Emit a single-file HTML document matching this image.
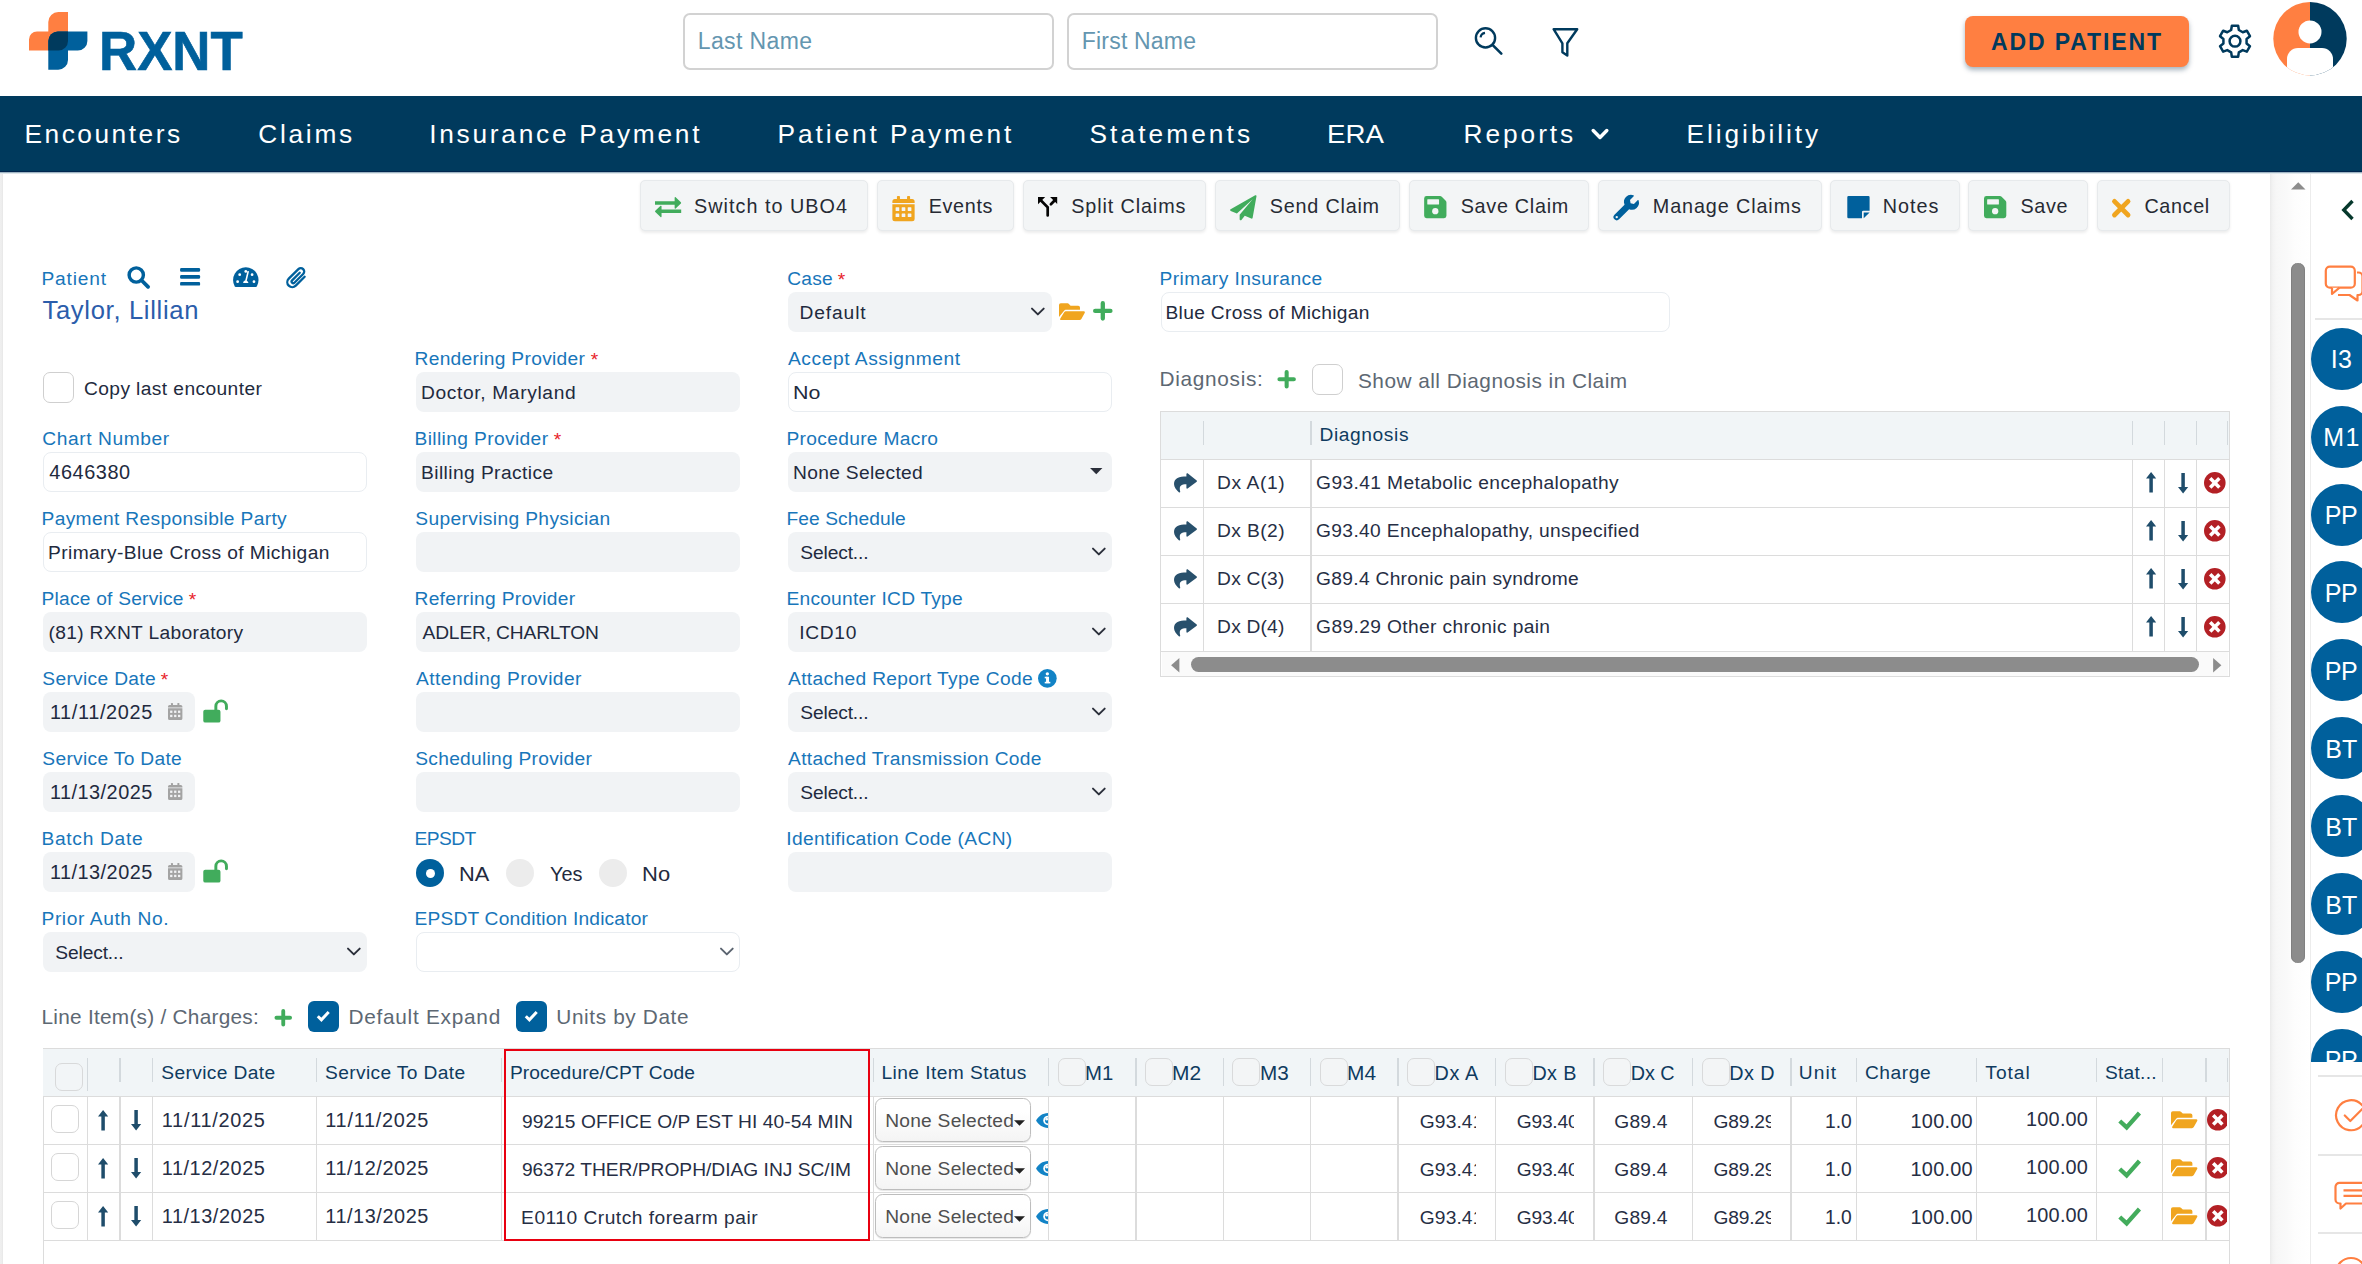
<!DOCTYPE html>
<html lang="en"><head><meta charset="utf-8"><title>RXNT Billing - Encounter</title>
<style>
html,body{margin:0;padding:0;background:#fff;}
body{width:2362px;height:1264px;position:relative;overflow:hidden;font-family:"Liberation Sans",sans-serif;}
.t{position:absolute;white-space:nowrap;}
svg{display:block;overflow:visible}
</style></head><body>
<svg style="position:absolute;left:29.0px;top:12.3px;" width="58.4" height="57.7" viewBox="0 0 58.400 57.700"><path d="M29.300 0H39V29a9.600 9.600 0 0 1-9.600 9.600H0V27.500a8 8 0 0 1 8-8H19.300V10A10 10 0 0 1 29.300 0z" fill="#ff7f41"/><path d="M28.900 19.500H58.400V29a9.600 9.600 0 0 1-9.600 9.600H39V48a9.700 9.700 0 0 1-9.700 9.700H19.300V29.100a9.600 9.600 0 0 1 9.600-9.600z" fill="#00609c"/><path d="M28.900 19.500H39V29a9.600 9.600 0 0 1-9.600 9.600H19.300V29.100a9.600 9.600 0 0 1 9.600-9.600z" fill="#003a5d"/></svg>
<span class="t " style="top:15.5px;font-size:54.6px;line-height:71px;color:#00609c;left:98.5px;font-weight:700;-webkit-text-stroke:0.6px #00609c;transform:scaleX(0.9674);transform-origin:0 0;">RXNT</span>
<div style="position:absolute;left:683.0px;top:12.5px;width:371.0px;height:57.0px;box-sizing:border-box;border:2px solid #d2d2d2;border-radius:7px;background:#fff;"></div>
<span class="t " style="top:25.5px;font-size:23.0px;line-height:30px;color:#6496b0;left:697.8px;letter-spacing:0.37px;">Last Name</span>
<div style="position:absolute;left:1067.0px;top:12.5px;width:371.0px;height:57.0px;box-sizing:border-box;border:2px solid #d2d2d2;border-radius:7px;background:#fff;"></div>
<span class="t " style="top:25.5px;font-size:23.0px;line-height:30px;color:#6496b0;left:1081.8px;letter-spacing:0.19px;">First Name</span>
<svg style="position:absolute;left:1470.0px;top:24.0px;" width="36.0" height="34.0" viewBox="1470 24 36 34"><circle cx="1485.500" cy="37.900" r="9.600" fill="none" stroke="#003a5d" stroke-width="2.400"/><path d="M1492.500 44.800L1501.300 53.700" stroke="#003a5d" stroke-width="2.600" stroke-linecap="round"/><path d="M1480.600 37.300A5.200 5.200 0 0 1 1485 32.900" fill="none" stroke="#003a5d" stroke-width="2.200"/></svg>
<svg style="position:absolute;left:1550.0px;top:24.0px;" width="32.0" height="36.0" viewBox="1550 24 32 36"><path d="M1553.600 29.200H1577.200L1567.300 43.300V55.600L1562.400 52.300V43.300Z" fill="none" stroke="#003a5d" stroke-width="2.400" stroke-linejoin="round"/></svg>
<div style="position:absolute;left:1965.3px;top:15.8px;width:223.5px;height:51.0px;box-sizing:border-box;background:#ff7f41;border-radius:8px;box-shadow:0 3px 5px rgba(0,40,70,.35);"></div>
<span class="t " style="top:26.5px;font-size:23.0px;line-height:30px;color:#003a5d;left:1991.0px;letter-spacing:1.89px;font-weight:700;">ADD PATIENT</span>
<svg style="position:absolute;left:2215.0px;top:20.0px;" width="40.0" height="42.0" viewBox="2215 20 40 42"><path d="M2231.16 30.04L2231.85 25.72L2238.15 25.72L2238.84 30.04L2242.74 32.29L2246.83 30.73L2249.98 36.19L2246.58 38.95L2246.58 43.45L2249.98 46.21L2246.83 51.67L2242.74 50.11L2238.84 52.36L2238.15 56.68L2231.85 56.68L2231.16 52.36L2227.26 50.11L2223.17 51.67L2220.02 46.21L2223.42 43.45L2223.42 38.95L2220.02 36.19L2223.17 30.73L2227.26 32.29Z" fill="none" stroke="#003a5d" stroke-width="2.500" stroke-linejoin="round"/><circle cx="2235.0" cy="41.2" r="5.400" fill="none" stroke="#003a5d" stroke-width="2.500"/></svg>
<svg style="position:absolute;left:2273.0px;top:2.0px;" width="74.0" height="74.0" viewBox="0 0 74 74"><defs><clipPath id="avc"><circle cx="37" cy="36.700" r="36.700"/></clipPath></defs><g clip-path="url(#avc)"><rect x="0" y="0" width="37" height="74" fill="#ff7f41"/><rect x="37" y="0" width="37" height="74" fill="#003a5d"/><circle cx="37" cy="29.900" r="11.500" fill="#fff"/><rect x="14" y="46" width="46" height="40" rx="11" fill="#fff"/></g></svg>
<div style="position:absolute;left:0.0px;top:96.0px;width:2362.0px;height:76.0px;box-sizing:border-box;background:#003a5d;"></div>
<span class="t " style="top:117.2px;font-size:26.3px;line-height:34px;color:#fff;left:24.5px;letter-spacing:2.51px;">Encounters</span>
<span class="t " style="top:117.2px;font-size:26.3px;line-height:34px;color:#fff;left:258.2px;letter-spacing:2.73px;">Claims</span>
<span class="t " style="top:117.2px;font-size:26.3px;line-height:34px;color:#fff;left:429.2px;letter-spacing:2.73px;">Insurance Payment</span>
<span class="t " style="top:117.2px;font-size:26.3px;line-height:34px;color:#fff;left:777.5px;letter-spacing:2.92px;">Patient Payment</span>
<span class="t " style="top:117.2px;font-size:26.3px;line-height:34px;color:#fff;left:1089.5px;letter-spacing:3.06px;">Statements</span>
<span class="t " style="top:117.2px;font-size:26.3px;line-height:34px;color:#fff;left:1327.4px;transform:scaleX(1.0518);transform-origin:0 0;">ERA</span>
<span class="t " style="top:117.2px;font-size:26.3px;line-height:34px;color:#fff;left:1463.5px;letter-spacing:2.94px;">Reports</span>
<span class="t " style="top:117.2px;font-size:26.3px;line-height:34px;color:#fff;left:1686.5px;letter-spacing:2.94px;">Eligibility</span>
<svg style="position:absolute;left:1591.3px;top:127.6px;" width="18.0" height="12.0" viewBox="0 0 18 12"><path d="M2.200 2.600L9 9.400L15.800 2.600" fill="none" stroke="#fff" stroke-width="3.500" stroke-linecap="round" stroke-linejoin="round"/></svg>
<div style="position:absolute;left:0.0px;top:170.5px;width:2362.0px;height:1.5px;box-sizing:border-box;background:#01264f;"></div>
<div style="position:absolute;left:0.0px;top:172.0px;width:2362.0px;height:1.5px;box-sizing:border-box;background:linear-gradient(180deg,#7f9db0,#fff);"></div>
<div style="position:absolute;left:0.0px;top:174.0px;width:3.2px;height:1090.0px;box-sizing:border-box;background:linear-gradient(90deg,#efefef 0,#ededed 70%,#e4e4e4 100%);"></div>
<div style="position:absolute;left:2270.0px;top:174.0px;width:41.0px;height:1090.0px;box-sizing:border-box;background:linear-gradient(90deg,#eaeaea 0,#f3f3f3 7%,#f7f7f7 16%,#f9f9f9 40%,#fdfdfd 60%,#fff 100%);"></div>
<svg style="position:absolute;left:2291.0px;top:182.0px;" width="14.5" height="7.5" viewBox="0 0 14 7"><path d="M7 0L14 7H0z" fill="#8c8c8c"/></svg>
<div style="position:absolute;left:2291.0px;top:262.5px;width:14.1px;height:700.0px;box-sizing:border-box;background:#8c8c8c;border-radius:7px;box-shadow:inset 1px 0 #808080,inset -1px 0 #808080;"></div>
<div style="position:absolute;left:2310.2px;top:174.0px;width:52.0px;height:1090.0px;box-sizing:border-box;background:#fff;border-left:1.700px solid #ececec;"></div>
<svg style="position:absolute;left:2341.0px;top:199.0px;" width="14.0" height="22.0" viewBox="0 0 14 22"><path d="M11.500 2L2.800 11L11.500 20" fill="none" stroke="#06382c" stroke-width="3.400" stroke-linejoin="miter"/></svg>
<svg style="position:absolute;left:2324.0px;top:264.0px;" width="40.0" height="38.0" viewBox="0 0 40 38"><rect x="1.800" y="2.700" width="29" height="21" rx="4" fill="#fff" stroke="#ff7f41" stroke-width="2.200"/><path d="M33 8.500h1.500a4 4 0 0 1 4 4V27a4 4 0 0 1-4 4H33.500V36.500L25.500 31H14" fill="none" stroke="#ff7f41" stroke-width="2.200" stroke-linejoin="round"/><path d="M8 23.700V30L15.500 23.700" fill="#fff" stroke="#ff7f41" stroke-width="2.200" stroke-linejoin="round"/></svg>
<div style="position:absolute;left:2315.0px;top:318.0px;width:47.0px;height:2.0px;box-sizing:border-box;background:#e6e6e6;"></div>
<div style="position:absolute;left:2311px;top:320px;width:51px;height:742.200px;overflow:hidden;">
<div style="position:absolute;left:0.100px;top:7.7px;width:62px;height:62px;border-radius:50%;background:#00609c;"></div>
<span class="t" style="left:19.8px;top:24.2px;font-size:25px;line-height:30px;color:#fff;letter-spacing:0.15px;">I3</span>
<div style="position:absolute;left:0.100px;top:85.6px;width:62px;height:62px;border-radius:50%;background:#00609c;"></div>
<span class="t" style="left:12.3px;top:102.1px;font-size:25px;line-height:30px;color:#fff;letter-spacing:1.27px;">M1</span>
<div style="position:absolute;left:0.100px;top:163.5px;width:62px;height:62px;border-radius:50%;background:#00609c;"></div>
<span class="t" style="left:13.8px;top:180.0px;font-size:25px;line-height:30px;color:#fff;letter-spacing:-0.35px;">PP</span>
<div style="position:absolute;left:0.100px;top:241.4px;width:62px;height:62px;border-radius:50%;background:#00609c;"></div>
<span class="t" style="left:13.8px;top:257.9px;font-size:25px;line-height:30px;color:#fff;letter-spacing:-0.35px;">PP</span>
<div style="position:absolute;left:0.100px;top:319.3px;width:62px;height:62px;border-radius:50%;background:#00609c;"></div>
<span class="t" style="left:13.8px;top:335.8px;font-size:25px;line-height:30px;color:#fff;letter-spacing:-0.35px;">PP</span>
<div style="position:absolute;left:0.100px;top:397.2px;width:62px;height:62px;border-radius:50%;background:#00609c;"></div>
<span class="t" style="left:14.3px;top:413.7px;font-size:25px;line-height:30px;color:#fff;letter-spacing:0.05px;">BT</span>
<div style="position:absolute;left:0.100px;top:475.1px;width:62px;height:62px;border-radius:50%;background:#00609c;"></div>
<span class="t" style="left:14.3px;top:491.6px;font-size:25px;line-height:30px;color:#fff;letter-spacing:0.05px;">BT</span>
<div style="position:absolute;left:0.100px;top:553.0px;width:62px;height:62px;border-radius:50%;background:#00609c;"></div>
<span class="t" style="left:14.3px;top:569.5px;font-size:25px;line-height:30px;color:#fff;letter-spacing:0.05px;">BT</span>
<div style="position:absolute;left:0.100px;top:630.9px;width:62px;height:62px;border-radius:50%;background:#00609c;"></div>
<span class="t" style="left:13.8px;top:647.4px;font-size:25px;line-height:30px;color:#fff;letter-spacing:-0.35px;">PP</span>
<div style="position:absolute;left:0.100px;top:708.8px;width:62px;height:62px;border-radius:50%;background:#00609c;"></div>
<span class="t" style="left:13.8px;top:725.3px;font-size:25px;line-height:30px;color:#fff;letter-spacing:-0.35px;">PP</span>
</div>
<div style="position:absolute;left:2318.0px;top:1074.5px;width:44.0px;height:2.0px;box-sizing:border-box;background:#e6e6e6;"></div>
<div style="position:absolute;left:2318.0px;top:1153.5px;width:44.0px;height:2.0px;box-sizing:border-box;background:#e6e6e6;"></div>
<div style="position:absolute;left:2318.0px;top:1231.5px;width:44.0px;height:2.0px;box-sizing:border-box;background:#e6e6e6;"></div>
<svg style="position:absolute;left:2333.5px;top:1099.0px;" width="34.0" height="34.0" viewBox="0 0 34 34"><path d="M28.300 6.300A15 15 0 1 0 31.700 13" fill="none" stroke="#ff7f41" stroke-width="2.200" stroke-linecap="round"/><path d="M10.800 16.500L16.300 22L31 7.300" fill="none" stroke="#ff7f41" stroke-width="2.200" stroke-linecap="round" stroke-linejoin="round"/></svg>
<svg style="position:absolute;left:2333.5px;top:1181.3px;" width="34.0" height="30.0" viewBox="0 0 34 30"><path d="M5.500 1.800H34V22.500H12L6.500 27.500V22.500H5.500A4 4 0 0 1 1.500 18.500V5.800A4 4 0 0 1 5.500 1.800Z" fill="none" stroke="#ff7f41" stroke-width="2.200" stroke-linejoin="round"/><path d="M9.500 9.300H30M9.500 14.800H30" stroke="#ff7f41" stroke-width="2.200"/></svg>
<svg style="position:absolute;left:2333.5px;top:1256.0px;" width="34.0" height="34.0" viewBox="0 0 34 34"><circle cx="17" cy="17" r="15" fill="none" stroke="#ff7f41" stroke-width="2.200"/><circle cx="17" cy="15" r="5" fill="none" stroke="#ff7f41" stroke-width="2.200"/></svg>
<div style="position:absolute;left:639.5px;top:180.0px;width:228.3px;height:51.0px;box-sizing:border-box;background:#f3f5f6;border:1px solid #e7eaec;border-radius:5px;box-shadow:0 1.500px 3px rgba(0,0,0,.075);"></div>
<svg style="position:absolute;left:654.6px;top:197.4px;" width="26.2" height="20.3" viewBox="0 0 26 20"><path d="M0 4.2h19.5V0.6c0-.6.6-.8 1-.4l5.2 4.9c.4.4.4.9 0 1.300l-5.2 4.900c-.4.400-1 .200-1-.400V7.600H0z" fill="#41ac5c"/><path d="M26 15.800H6.500v3.600c0 .6-.6.8-1 .4L.3 14.900c-.4-.4-.4-.9 0-1.300l5.200-4.900c.4-.4 1-.2 1 .4v3.300H26z" fill="#41ac5c"/></svg>
<span class="t " style="top:192.7px;font-size:19.8px;line-height:26px;color:#262a33;left:694.0px;letter-spacing:1.03px;">Switch to UBO4</span>
<div style="position:absolute;left:877.0px;top:180.0px;width:136.5px;height:51.0px;box-sizing:border-box;background:#f3f5f6;border:1px solid #e7eaec;border-radius:5px;box-shadow:0 1.500px 3px rgba(0,0,0,.075);"></div>
<svg style="position:absolute;left:892.0px;top:195.6px;" width="23.0" height="25.3" viewBox="0 0 22 25"><path d="M0 8.200h22v14.300a2.500 2.500 0 0 1-2.500 2.500h-17A2.500 2.500 0 0 1 0 22.500z" fill="#f0a51f"/><path d="M2.500 3h17A2.500 2.500 0 0 1 22 5.500V7H0V5.500A2.500 2.500 0 0 1 2.500 3z" fill="#f0a51f"/><rect x="4.500" y="0" width="3" height="5" rx="0.800" fill="#f0a51f"/><rect x="14.500" y="0" width="3" height="5" rx="0.800" fill="#f0a51f"/><rect x="3.2" y="11.2" width="3.600" height="3.600" rx=".5" fill="#f3f5f6"/><rect x="9.2" y="11.2" width="3.600" height="3.600" rx=".5" fill="#f3f5f6"/><rect x="15.2" y="11.2" width="3.600" height="3.600" rx=".5" fill="#f3f5f6"/><rect x="3.2" y="17.2" width="3.600" height="3.600" rx=".5" fill="#f3f5f6"/><rect x="9.2" y="17.2" width="3.600" height="3.600" rx=".5" fill="#f3f5f6"/><rect x="15.2" y="17.2" width="3.600" height="3.600" rx=".5" fill="#f3f5f6"/></svg>
<span class="t " style="top:192.7px;font-size:19.8px;line-height:26px;color:#262a33;left:928.7px;letter-spacing:0.66px;">Events</span>
<div style="position:absolute;left:1022.5px;top:180.0px;width:183.5px;height:51.0px;box-sizing:border-box;background:#f3f5f6;border:1px solid #e7eaec;border-radius:5px;box-shadow:0 1.500px 3px rgba(0,0,0,.075);"></div>
<svg style="position:absolute;left:1037.9px;top:197.0px;" width="19.2" height="19.6" viewBox="0 0 19.200 19.600"><path d="M9.700 18.400V10.200L3 3.500" fill="none" stroke="#050505" stroke-width="2.700" stroke-linecap="round" stroke-linejoin="miter"/><path d="M12.900 7.300L16.600 3.500" fill="none" stroke="#050505" stroke-width="2.700" stroke-linecap="round"/><path d="M0 0h7.200L0 7.300z" fill="#050505"/><path d="M19.200 0h-7.100l7.100 7.100z" fill="#050505"/></svg>
<span class="t " style="top:192.7px;font-size:19.8px;line-height:26px;color:#262a33;left:1071.2px;letter-spacing:0.89px;">Split Claims</span>
<div style="position:absolute;left:1215.0px;top:180.0px;width:185.0px;height:51.0px;box-sizing:border-box;background:#f3f5f6;border:1px solid #e7eaec;border-radius:5px;box-shadow:0 1.500px 3px rgba(0,0,0,.075);"></div>
<svg style="position:absolute;left:1230.0px;top:195.0px;" width="26.6" height="25.6" viewBox="0 0 27 26"><path d="M25.600 0.300L0.600 14.600c-.7.400-.6 1.300.1 1.600l6.300 2.600L23 4.200 9.800 20.100v4.600c0 1 1.200 1.400 1.800.700l3.400-4.200 6.600 2.700c.6.300 1.300-.1 1.400-.8L26.900 1.200c.1-.8-.7-1.300-1.300-.9z" fill="#41ac5c"/></svg>
<span class="t " style="top:192.7px;font-size:19.8px;line-height:26px;color:#262a33;left:1269.8px;letter-spacing:0.78px;">Send Claim</span>
<div style="position:absolute;left:1409.0px;top:180.0px;width:180.0px;height:51.0px;box-sizing:border-box;background:#f3f5f6;border:1px solid #e7eaec;border-radius:5px;box-shadow:0 1.500px 3px rgba(0,0,0,.075);"></div>
<svg style="position:absolute;left:1424.0px;top:196.4px;" width="22.6" height="22.3" viewBox="0 0 22 22"><path d="M2.400 0h13.300c.6 0 1.200.3 1.700.7l3.900 3.900c.4.400.7 1 .7 1.700v13.300A2.400 2.400 0 0 1 19.600 22H2.400A2.400 2.400 0 0 1 0 19.600V2.400A2.400 2.400 0 0 1 2.400 0z" fill="#41ac5c"/><rect x="3.100" y="3.100" width="11.600" height="5.300" rx=".6" fill="#f3f5f6"/><circle cx="11" cy="15" r="3.100" fill="#f3f5f6"/></svg>
<span class="t " style="top:192.7px;font-size:19.8px;line-height:26px;color:#262a33;left:1460.7px;letter-spacing:0.71px;">Save Claim</span>
<div style="position:absolute;left:1597.5px;top:180.0px;width:224.5px;height:51.0px;box-sizing:border-box;background:#f3f5f6;border:1px solid #e7eaec;border-radius:5px;box-shadow:0 1.500px 3px rgba(0,0,0,.075);"></div>
<svg style="position:absolute;left:1613.0px;top:195.0px;" width="26.4" height="25.4" viewBox="0 0 26 26"><path d="M25.700 5.600c-.1-.5-.7-.6-1-.3l-3.800 3.800-3.400-.6-.6-3.400 3.800-3.800c.4-.4.200-1-.3-1.100A7.300 7.300 0 0 0 11.300 9.900L1 20.200a3.300 3.300 0 0 0 4.700 4.700L16 14.600a7.300 7.300 0 0 0 9.700-9z" fill="#00609c"/><circle cx="3.300" cy="22.600" r="1.200" fill="#f3f5f6"/></svg>
<span class="t " style="top:192.7px;font-size:19.8px;line-height:26px;color:#262a33;left:1652.8px;letter-spacing:0.89px;">Manage Claims</span>
<div style="position:absolute;left:1830.0px;top:180.0px;width:129.5px;height:51.0px;box-sizing:border-box;background:#f3f5f6;border:1px solid #e7eaec;border-radius:5px;box-shadow:0 1.500px 3px rgba(0,0,0,.075);"></div>
<svg style="position:absolute;left:1846.5px;top:196.4px;" width="22.9" height="22.3" viewBox="0 0 22 22"><path d="M1.200 0h19.600A1.200 1.200 0 0 1 22 1.200V14.500h-6.300a1.200 1.200 0 0 0-1.200 1.200V22H1.200A1.200 1.200 0 0 1 0 20.800V1.200A1.200 1.200 0 0 1 1.200 0z" fill="#00609c"/><path d="M22 16.200L16.200 22V16.200z" fill="#00609c"/></svg>
<span class="t " style="top:192.7px;font-size:19.8px;line-height:26px;color:#262a33;left:1882.8px;letter-spacing:0.97px;">Notes</span>
<div style="position:absolute;left:1968.0px;top:180.0px;width:120.0px;height:51.0px;box-sizing:border-box;background:#f3f5f6;border:1px solid #e7eaec;border-radius:5px;box-shadow:0 1.500px 3px rgba(0,0,0,.075);"></div>
<svg style="position:absolute;left:1984.0px;top:196.4px;" width="22.3" height="22.3" viewBox="0 0 22 22"><path d="M2.400 0h13.300c.6 0 1.200.3 1.700.7l3.900 3.900c.4.400.7 1 .7 1.700v13.300A2.400 2.400 0 0 1 19.600 22H2.400A2.400 2.400 0 0 1 0 19.600V2.400A2.400 2.400 0 0 1 2.400 0z" fill="#41ac5c"/><rect x="3.100" y="3.100" width="11.600" height="5.300" rx=".6" fill="#f3f5f6"/><circle cx="11" cy="15" r="3.100" fill="#f3f5f6"/></svg>
<span class="t " style="top:192.7px;font-size:19.8px;line-height:26px;color:#262a33;left:2020.4px;letter-spacing:0.66px;">Save</span>
<div style="position:absolute;left:2096.5px;top:180.0px;width:133.0px;height:51.0px;box-sizing:border-box;background:#f3f5f6;border:1px solid #e7eaec;border-radius:5px;box-shadow:0 1.500px 3px rgba(0,0,0,.075);"></div>
<svg style="position:absolute;left:2111.5px;top:198.5px;" width="18.5" height="18.3" viewBox="0 0 18 18"><path d="M2.300 2.300L15.700 15.700M15.700 2.300L2.300 15.700" stroke="#f0a51f" stroke-width="4.7" stroke-linecap="round" fill="none"/></svg>
<span class="t " style="top:192.7px;font-size:19.8px;line-height:26px;color:#262a33;left:2144.4px;letter-spacing:0.64px;">Cancel</span>
<span class="t " style="top:265.8px;font-size:19.2px;line-height:25px;color:#1876ba;left:41.5px;letter-spacing:0.82px;">Patient</span>
<svg style="position:absolute;left:127.0px;top:265.7px;" width="23.0" height="22.5" viewBox="0 0 23 23"><circle cx="9.200" cy="9.200" r="7.300" fill="none" stroke="#00609c" stroke-width="3.500"/><path d="M14.800 14.800L21.300 21.300" stroke="#00609c" stroke-width="3.900" stroke-linecap="round"/></svg>
<svg style="position:absolute;left:180.0px;top:268.0px;" width="20.2" height="17.6" viewBox="0 0 20 17.600"><rect x="0" y="0.0" width="20" height="3.700" rx="1.200" fill="#00609c"/><rect x="0" y="7.0" width="20" height="3.700" rx="1.200" fill="#00609c"/><rect x="0" y="13.9" width="20" height="3.700" rx="1.200" fill="#00609c"/></svg>
<svg style="position:absolute;left:233.0px;top:266.8px;" width="25.6" height="20.1" viewBox="0 0 26 20"><path d="M13 0a13 13 0 0 0-11.200 19.500c.2.300.6.500 1 .5h20.400c.4 0 .8-.2 1-.5A13 13 0 0 0 13 0z" fill="#00609c"/><circle cx="4.7" cy="14.7" r="1.400" fill="#fff"/><circle cx="6.8" cy="7.6" r="1.400" fill="#fff"/><circle cx="13" cy="4.3" r="1.400" fill="#fff"/><circle cx="19.4" cy="7.6" r="1.400" fill="#fff"/><circle cx="21.3" cy="14.7" r="1.400" fill="#fff"/><path d="M16.300 4.200l-2.300 9.500c1 .4 1.600 1.300 1.600 2.400h-5.300c0-1.300.9-2.400 2.100-2.600l2.300-9.600z" fill="#fff"/></svg>
<svg style="position:absolute;left:286.0px;top:265.7px;" width="21.0" height="23.0" viewBox="0 0 20 22"><path d="M17.800 10.300L9.300 18.800a4.700 4.700 0 0 1-6.700-6.700L11.800 3a3.200 3.200 0 0 1 4.600 4.600L8 16a1.500 1.500 0 0 1-2.200-2.200l7.300-7.300" fill="none" stroke="#00609c" stroke-width="2.200" stroke-linecap="round"/></svg>
<span class="t " style="top:293.6px;font-size:25.6px;line-height:33px;color:#2b5dab;left:42.5px;letter-spacing:0.67px;">Taylor, Lillian</span>
<div style="position:absolute;left:43.0px;top:372.0px;width:30.6px;height:30.6px;box-sizing:border-box;background:#fff;border:1.600px solid #cfcfcf;border-radius:7px;"></div>
<span class="t " style="top:375.8px;font-size:19.2px;line-height:25px;color:#222a3e;left:84.0px;letter-spacing:0.40px;">Copy last encounter</span>
<span class="t " style="top:425.8px;font-size:19.2px;line-height:25px;color:#1876ba;left:42.3px;letter-spacing:0.57px;">Chart Number</span>
<div style="position:absolute;left:43.0px;top:452.0px;width:324.0px;height:40.0px;box-sizing:border-box;background:#fff;border:1.700px solid #e9edf1;border-radius:8px;"></div>
<span class="t " style="top:458.9px;font-size:19.9px;line-height:26px;color:#222a3e;left:49.3px;letter-spacing:0.56px;">4646380</span>
<span class="t " style="top:505.8px;font-size:19.2px;line-height:25px;color:#1876ba;left:41.5px;letter-spacing:0.35px;">Payment Responsible Party</span>
<div style="position:absolute;left:43.0px;top:532.0px;width:324.0px;height:40.0px;box-sizing:border-box;background:#fff;border:1.700px solid #e9edf1;border-radius:8px;"></div>
<span class="t " style="top:539.6px;font-size:19.2px;line-height:25px;color:#222a3e;left:48.0px;letter-spacing:0.40px;">Primary-Blue Cross of Michigan</span>
<span class="t " style="top:585.8px;font-size:19.2px;line-height:25px;color:#1876ba;left:41.5px;letter-spacing:0.22px;">Place of Service</span>
<span class="t " style="top:586.8px;font-size:19.2px;line-height:25px;color:#e8232a;left:188.8px;">*</span>
<div style="position:absolute;left:43.0px;top:612.0px;width:324.0px;height:40.0px;box-sizing:border-box;background:#f1f3f5;border-radius:8px;"></div>
<span class="t " style="top:619.6px;font-size:19.2px;line-height:25px;color:#222a3e;left:48.5px;letter-spacing:0.33px;">(81) RXNT Laboratory</span>
<span class="t " style="top:665.8px;font-size:19.2px;line-height:25px;color:#1876ba;left:42.3px;letter-spacing:0.32px;">Service Date</span>
<span class="t " style="top:666.8px;font-size:19.2px;line-height:25px;color:#e8232a;left:160.8px;">*</span>
<div style="position:absolute;left:43.0px;top:692.0px;width:152.0px;height:40.0px;box-sizing:border-box;background:#f1f3f5;border-radius:8px;"></div>
<span class="t " style="top:699.1px;font-size:19.9px;line-height:26px;color:#222a3e;left:49.9px;letter-spacing:0.64px;">11/11/2025</span>
<svg style="position:absolute;left:167.6px;top:703.0px;" width="14.4" height="17.0" viewBox="0 0 14.400 17"><path d="M0 5.300h14.400V15.400a1.600 1.600 0 0 1-1.600 1.600H1.600A1.600 1.600 0 0 1 0 15.400z" fill="#a3a3a3"/><path d="M1.600 2h11.200a1.600 1.600 0 0 1 1.600 1.600V4.500H0V3.600A1.600 1.600 0 0 1 1.600 2z" fill="#a3a3a3"/><rect x="3" y="0" width="2" height="3.400" rx=".5" fill="#a3a3a3"/><rect x="9.400" y="0" width="2" height="3.400" rx=".5" fill="#a3a3a3"/><rect x="2.1" y="7.6" width="2.300" height="2.300" fill="#f1f2f4"/><rect x="6.1" y="7.6" width="2.300" height="2.300" fill="#f1f2f4"/><rect x="10.0" y="7.6" width="2.300" height="2.300" fill="#f1f2f4"/><rect x="2.1" y="11.8" width="2.300" height="2.300" fill="#f1f2f4"/><rect x="6.1" y="11.8" width="2.300" height="2.300" fill="#f1f2f4"/><rect x="10.0" y="11.8" width="2.300" height="2.300" fill="#f1f2f4"/></svg>
<svg style="position:absolute;left:202.5px;top:700.0px;" width="26.1" height="22.6" viewBox="0 0 26 23"><rect x="0" y="10" width="17.500" height="13" rx="2" fill="#41ac5c"/><path d="M12.800 10.500V6.300a5.400 5.400 0 0 1 10.800 0V9" fill="none" stroke="#41ac5c" stroke-width="3" stroke-linecap="round"/></svg>
<span class="t " style="top:745.8px;font-size:19.2px;line-height:25px;color:#1876ba;left:42.3px;letter-spacing:0.31px;">Service To Date</span>
<div style="position:absolute;left:43.0px;top:772.0px;width:152.0px;height:40.0px;box-sizing:border-box;background:#f1f3f5;border-radius:8px;"></div>
<span class="t " style="top:779.1px;font-size:19.9px;line-height:26px;color:#222a3e;left:49.9px;letter-spacing:0.48px;">11/13/2025</span>
<svg style="position:absolute;left:167.6px;top:783.0px;" width="14.4" height="17.0" viewBox="0 0 14.400 17"><path d="M0 5.300h14.400V15.400a1.600 1.600 0 0 1-1.600 1.600H1.600A1.600 1.600 0 0 1 0 15.400z" fill="#a3a3a3"/><path d="M1.600 2h11.200a1.600 1.600 0 0 1 1.600 1.600V4.500H0V3.600A1.600 1.600 0 0 1 1.600 2z" fill="#a3a3a3"/><rect x="3" y="0" width="2" height="3.400" rx=".5" fill="#a3a3a3"/><rect x="9.400" y="0" width="2" height="3.400" rx=".5" fill="#a3a3a3"/><rect x="2.1" y="7.6" width="2.300" height="2.300" fill="#f1f2f4"/><rect x="6.1" y="7.6" width="2.300" height="2.300" fill="#f1f2f4"/><rect x="10.0" y="7.6" width="2.300" height="2.300" fill="#f1f2f4"/><rect x="2.1" y="11.8" width="2.300" height="2.300" fill="#f1f2f4"/><rect x="6.1" y="11.8" width="2.300" height="2.300" fill="#f1f2f4"/><rect x="10.0" y="11.8" width="2.300" height="2.300" fill="#f1f2f4"/></svg>
<span class="t " style="top:825.8px;font-size:19.2px;line-height:25px;color:#1876ba;left:41.5px;letter-spacing:0.69px;">Batch Date</span>
<div style="position:absolute;left:43.0px;top:852.0px;width:152.0px;height:40.0px;box-sizing:border-box;background:#f1f3f5;border-radius:8px;"></div>
<span class="t " style="top:859.1px;font-size:19.9px;line-height:26px;color:#222a3e;left:49.9px;letter-spacing:0.48px;">11/13/2025</span>
<svg style="position:absolute;left:167.6px;top:863.0px;" width="14.4" height="17.0" viewBox="0 0 14.400 17"><path d="M0 5.300h14.400V15.400a1.600 1.600 0 0 1-1.600 1.600H1.600A1.600 1.600 0 0 1 0 15.400z" fill="#a3a3a3"/><path d="M1.600 2h11.200a1.600 1.600 0 0 1 1.600 1.600V4.500H0V3.600A1.600 1.600 0 0 1 1.600 2z" fill="#a3a3a3"/><rect x="3" y="0" width="2" height="3.400" rx=".5" fill="#a3a3a3"/><rect x="9.400" y="0" width="2" height="3.400" rx=".5" fill="#a3a3a3"/><rect x="2.1" y="7.6" width="2.300" height="2.300" fill="#f1f2f4"/><rect x="6.1" y="7.6" width="2.300" height="2.300" fill="#f1f2f4"/><rect x="10.0" y="7.6" width="2.300" height="2.300" fill="#f1f2f4"/><rect x="2.1" y="11.8" width="2.300" height="2.300" fill="#f1f2f4"/><rect x="6.1" y="11.8" width="2.300" height="2.300" fill="#f1f2f4"/><rect x="10.0" y="11.8" width="2.300" height="2.300" fill="#f1f2f4"/></svg>
<svg style="position:absolute;left:202.5px;top:860.0px;" width="26.1" height="22.6" viewBox="0 0 26 23"><rect x="0" y="10" width="17.500" height="13" rx="2" fill="#41ac5c"/><path d="M12.800 10.500V6.300a5.400 5.400 0 0 1 10.800 0V9" fill="none" stroke="#41ac5c" stroke-width="3" stroke-linecap="round"/></svg>
<span class="t " style="top:905.8px;font-size:19.2px;line-height:25px;color:#1876ba;left:41.5px;letter-spacing:0.58px;">Prior Auth No.</span>
<div style="position:absolute;left:43.0px;top:932.0px;width:324.0px;height:40.0px;box-sizing:border-box;background:#f1f3f5;border-radius:8px;"></div>
<span class="t " style="top:939.6px;font-size:19.2px;line-height:25px;color:#222a3e;left:55.3px;letter-spacing:-0.13px;">Select...</span>
<svg style="position:absolute;left:346.5px;top:947.3px;" width="13.7" height="9.0" viewBox="0 0 14 8.400"><path d="M1 1.200L7 7.200L13 1.200" fill="none" stroke="#2b2f3a" stroke-width="2" stroke-linecap="round" stroke-linejoin="round"/></svg>
<span class="t " style="top:345.8px;font-size:19.2px;line-height:25px;color:#1876ba;left:414.5px;letter-spacing:0.30px;">Rendering Provider</span>
<span class="t " style="top:346.8px;font-size:19.2px;line-height:25px;color:#e8232a;left:590.8px;">*</span>
<div style="position:absolute;left:416.0px;top:372.0px;width:324.0px;height:40.0px;box-sizing:border-box;background:#f1f3f5;border-radius:8px;"></div>
<span class="t " style="top:379.6px;font-size:19.2px;line-height:25px;color:#222a3e;left:421.0px;letter-spacing:0.64px;">Doctor, Maryland</span>
<span class="t " style="top:425.8px;font-size:19.2px;line-height:25px;color:#1876ba;left:414.5px;letter-spacing:0.37px;">Billing Provider</span>
<span class="t " style="top:426.8px;font-size:19.2px;line-height:25px;color:#e8232a;left:553.8px;">*</span>
<div style="position:absolute;left:416.0px;top:452.0px;width:324.0px;height:40.0px;box-sizing:border-box;background:#f1f3f5;border-radius:8px;"></div>
<span class="t " style="top:459.6px;font-size:19.2px;line-height:25px;color:#222a3e;left:421.0px;letter-spacing:0.42px;">Billing Practice</span>
<span class="t " style="top:505.8px;font-size:19.2px;line-height:25px;color:#1876ba;left:415.3px;letter-spacing:0.36px;">Supervising Physician</span>
<div style="position:absolute;left:416.0px;top:532.0px;width:324.0px;height:40.0px;box-sizing:border-box;background:#f1f3f5;border-radius:8px;"></div>
<span class="t " style="top:585.8px;font-size:19.2px;line-height:25px;color:#1876ba;left:414.5px;letter-spacing:0.29px;">Referring Provider</span>
<div style="position:absolute;left:416.0px;top:612.0px;width:324.0px;height:40.0px;box-sizing:border-box;background:#f1f3f5;border-radius:8px;"></div>
<span class="t " style="top:619.6px;font-size:19.2px;line-height:25px;color:#222a3e;left:422.5px;letter-spacing:-0.15px;">ADLER, CHARLTON</span>
<span class="t " style="top:665.8px;font-size:19.2px;line-height:25px;color:#1876ba;left:416.0px;letter-spacing:0.45px;">Attending Provider</span>
<div style="position:absolute;left:416.0px;top:692.0px;width:324.0px;height:40.0px;box-sizing:border-box;background:#f1f3f5;border-radius:8px;"></div>
<span class="t " style="top:745.8px;font-size:19.2px;line-height:25px;color:#1876ba;left:415.3px;letter-spacing:0.27px;">Scheduling Provider</span>
<div style="position:absolute;left:416.0px;top:772.0px;width:324.0px;height:40.0px;box-sizing:border-box;background:#f1f3f5;border-radius:8px;"></div>
<span class="t " style="top:825.8px;font-size:19.2px;line-height:25px;color:#1876ba;left:414.5px;letter-spacing:-0.58px;">EPSDT</span>
<div style="position:absolute;left:416.0px;top:859.0px;width:28.0px;height:28.0px;box-sizing:border-box;border-radius:50%;background:#00609c;"></div>
<div style="position:absolute;left:425.5px;top:868.5px;width:9.0px;height:9.0px;box-sizing:border-box;border-radius:50%;background:#fff;"></div>
<span class="t " style="top:861.4px;font-size:20.2px;line-height:26px;color:#222a3e;left:459.1px;transform:scaleX(1.0793);transform-origin:0 0;">NA</span>
<div style="position:absolute;left:506.4px;top:859.0px;width:28.0px;height:28.0px;box-sizing:border-box;border-radius:50%;background:#ececec;"></div>
<span class="t " style="top:861.4px;font-size:20.2px;line-height:26px;color:#222a3e;left:549.7px;transform:scaleX(0.9854);transform-origin:0 0;">Yes</span>
<div style="position:absolute;left:598.8px;top:859.0px;width:28.0px;height:28.0px;box-sizing:border-box;border-radius:50%;background:#ececec;"></div>
<span class="t " style="top:861.4px;font-size:20.2px;line-height:26px;color:#222a3e;left:641.6px;transform:scaleX(1.0890);transform-origin:0 0;">No</span>
<span class="t " style="top:905.8px;font-size:19.2px;line-height:25px;color:#1876ba;left:414.5px;letter-spacing:0.19px;">EPSDT Condition Indicator</span>
<div style="position:absolute;left:416.0px;top:932.0px;width:324.0px;height:40.0px;box-sizing:border-box;background:#fff;border:1.700px solid #e9edf1;border-radius:8px;"></div>
<svg style="position:absolute;left:719.5px;top:947.3px;" width="13.7" height="9.0" viewBox="0 0 14 8.400"><path d="M1 1.200L7 7.200L13 1.200" fill="none" stroke="#5b6470" stroke-width="2" stroke-linecap="round" stroke-linejoin="round"/></svg>
<span class="t " style="top:265.8px;font-size:19.2px;line-height:25px;color:#1876ba;left:787.3px;letter-spacing:0.20px;">Case</span>
<span class="t " style="top:266.8px;font-size:19.2px;line-height:25px;color:#e8232a;left:837.8px;">*</span>
<div style="position:absolute;left:788.0px;top:292.0px;width:263.5px;height:40.0px;box-sizing:border-box;background:#f1f3f5;border-radius:8px;"></div>
<span class="t " style="top:299.6px;font-size:19.2px;line-height:25px;color:#222a3e;left:799.5px;letter-spacing:0.89px;">Default</span>
<svg style="position:absolute;left:1031.0px;top:307.3px;" width="13.7" height="9.0" viewBox="0 0 14 8.400"><path d="M1 1.200L7 7.200L13 1.200" fill="none" stroke="#2b2f3a" stroke-width="2" stroke-linecap="round" stroke-linejoin="round"/></svg>
<svg style="position:absolute;left:1059.4px;top:302.7px;" width="25.8" height="17.3" viewBox="0 0 26.300 17"><path d="M1.800 0h7c.4 0 .8.200 1.100.500l1.900 1.900h7.800a1.800 1.800 0 0 1 1.800 1.800V6.500H7.400c-1 0-1.900.500-2.400 1.400L0 14V1.800A1.800 1.800 0 0 1 1.800 0z" fill="#f0a51f"/><path d="M7.500 8.200h18c.700 0 1.100.800.800 1.400l-3.500 6.300c-.400.700-1.100 1.100-1.800 1.100H2c-.700 0-1.100-.700-.800-1.300l3.900-6.300c.500-.800 1.400-1.200 2.400-1.200z" fill="#f0a51f"/></svg>
<svg style="position:absolute;left:1092.9px;top:301.2px;" width="19.6" height="19.8" viewBox="0 0 20 20"><path d="M10 2.200V17.800M2.200 10H17.800" stroke="#41ac5c" stroke-width="4.4" stroke-linecap="round" fill="none"/></svg>
<span class="t " style="top:345.8px;font-size:19.2px;line-height:25px;color:#1876ba;left:788.0px;letter-spacing:0.56px;">Accept Assignment</span>
<div style="position:absolute;left:788.0px;top:372.0px;width:324.0px;height:40.0px;box-sizing:border-box;background:#fff;border:1.700px solid #e9edf1;border-radius:8px;"></div>
<span class="t " style="top:379.6px;font-size:19.2px;line-height:25px;color:#222a3e;left:792.8px;transform:scaleX(1.1140);transform-origin:0 0;">No</span>
<span class="t " style="top:425.8px;font-size:19.2px;line-height:25px;color:#1876ba;left:786.5px;letter-spacing:0.31px;">Procedure Macro</span>
<div style="position:absolute;left:788.0px;top:452.0px;width:324.0px;height:40.0px;box-sizing:border-box;background:#f1f3f5;border-radius:8px;"></div>
<span class="t " style="top:459.6px;font-size:19.2px;line-height:25px;color:#222a3e;left:793.0px;letter-spacing:0.32px;">None Selected</span>
<svg style="position:absolute;left:1090.0px;top:467.6px;" width="12.5" height="6.2" viewBox="0 0 12 6"><path d="M0 0h12L6 6z" fill="#2b2f3a"/></svg>
<span class="t " style="top:505.8px;font-size:19.2px;line-height:25px;color:#1876ba;left:786.5px;letter-spacing:0.07px;">Fee Schedule</span>
<div style="position:absolute;left:788.0px;top:532.0px;width:324.0px;height:40.0px;box-sizing:border-box;background:#f1f3f5;border-radius:8px;"></div>
<span class="t " style="top:539.6px;font-size:19.2px;line-height:25px;color:#222a3e;left:800.3px;letter-spacing:-0.13px;">Select...</span>
<svg style="position:absolute;left:1091.5px;top:547.3px;" width="13.7" height="9.0" viewBox="0 0 14 8.400"><path d="M1 1.200L7 7.200L13 1.200" fill="none" stroke="#2b2f3a" stroke-width="2" stroke-linecap="round" stroke-linejoin="round"/></svg>
<span class="t " style="top:585.8px;font-size:19.2px;line-height:25px;color:#1876ba;left:786.5px;letter-spacing:0.22px;">Encounter ICD Type</span>
<div style="position:absolute;left:788.0px;top:612.0px;width:324.0px;height:40.0px;box-sizing:border-box;background:#f1f3f5;border-radius:8px;"></div>
<span class="t " style="top:619.6px;font-size:19.2px;line-height:25px;color:#222a3e;left:799.3px;letter-spacing:0.66px;">ICD10</span>
<svg style="position:absolute;left:1091.5px;top:627.3px;" width="13.7" height="9.0" viewBox="0 0 14 8.400"><path d="M1 1.200L7 7.200L13 1.200" fill="none" stroke="#2b2f3a" stroke-width="2" stroke-linecap="round" stroke-linejoin="round"/></svg>
<span class="t " style="top:665.8px;font-size:19.2px;line-height:25px;color:#1876ba;left:788.0px;letter-spacing:0.34px;">Attached Report Type Code</span>
<svg style="position:absolute;left:1037.7px;top:668.8px;" width="18.7" height="18.7" viewBox="0 0 20 20"><circle cx="10" cy="10" r="10" fill="#1283c6"/><rect x="8.600" y="8.300" width="3.200" height="6.800" fill="#fff"/><rect x="7.200" y="8.300" width="3" height="1.700" fill="#fff"/><rect x="7.200" y="13.700" width="6" height="1.700" fill="#fff"/><circle cx="10" cy="5.200" r="1.800" fill="#fff"/></svg>
<div style="position:absolute;left:788.0px;top:692.0px;width:324.0px;height:40.0px;box-sizing:border-box;background:#f1f3f5;border-radius:8px;"></div>
<span class="t " style="top:699.6px;font-size:19.2px;line-height:25px;color:#222a3e;left:800.3px;letter-spacing:-0.13px;">Select...</span>
<svg style="position:absolute;left:1091.5px;top:707.3px;" width="13.7" height="9.0" viewBox="0 0 14 8.400"><path d="M1 1.200L7 7.200L13 1.200" fill="none" stroke="#2b2f3a" stroke-width="2" stroke-linecap="round" stroke-linejoin="round"/></svg>
<span class="t " style="top:745.8px;font-size:19.2px;line-height:25px;color:#1876ba;left:788.0px;letter-spacing:0.33px;">Attached Transmission Code</span>
<div style="position:absolute;left:788.0px;top:772.0px;width:324.0px;height:40.0px;box-sizing:border-box;background:#f1f3f5;border-radius:8px;"></div>
<span class="t " style="top:779.6px;font-size:19.2px;line-height:25px;color:#222a3e;left:800.3px;letter-spacing:-0.13px;">Select...</span>
<svg style="position:absolute;left:1091.5px;top:787.3px;" width="13.7" height="9.0" viewBox="0 0 14 8.400"><path d="M1 1.200L7 7.200L13 1.200" fill="none" stroke="#2b2f3a" stroke-width="2" stroke-linecap="round" stroke-linejoin="round"/></svg>
<span class="t " style="top:825.8px;font-size:19.2px;line-height:25px;color:#1876ba;left:786.3px;letter-spacing:0.35px;">Identification Code (ACN)</span>
<div style="position:absolute;left:788.0px;top:852.0px;width:324.0px;height:40.0px;box-sizing:border-box;background:#f1f3f5;border-radius:8px;"></div>
<span class="t " style="top:265.8px;font-size:19.2px;line-height:25px;color:#1876ba;left:1159.5px;letter-spacing:0.44px;">Primary Insurance</span>
<div style="position:absolute;left:1161.0px;top:292.0px;width:509.0px;height:40.0px;box-sizing:border-box;background:#fff;border:1.700px solid #e9edf1;border-radius:8px;"></div>
<span class="t " style="top:299.6px;font-size:19.2px;line-height:25px;color:#222a3e;left:1165.5px;letter-spacing:0.32px;">Blue Cross of Michigan</span>
<span class="t " style="top:364.9px;font-size:20.8px;line-height:27px;color:#5d6873;left:1159.5px;letter-spacing:0.70px;">Diagnosis:</span>
<svg style="position:absolute;left:1276.5px;top:369.7px;" width="19.3" height="18.5" viewBox="0 0 20 20"><path d="M10 2.200V17.800M2.200 10H17.800" stroke="#41ac5c" stroke-width="4.4" stroke-linecap="round" fill="none"/></svg>
<div style="position:absolute;left:1312.0px;top:364.3px;width:30.6px;height:30.6px;box-sizing:border-box;background:#fff;border:1.600px solid #cfcfcf;border-radius:7px;"></div>
<span class="t " style="top:367.3px;font-size:20.8px;line-height:27px;color:#5d6873;left:1358.0px;letter-spacing:0.48px;">Show all Diagnosis in Claim</span>
<div style="position:absolute;left:1160.4px;top:411.0px;width:1069.4px;height:266.3px;box-sizing:border-box;background:#fff;border:1.600px solid #dcdcdc;"></div>
<div style="position:absolute;left:1161.8px;top:652.3px;width:1066.4px;height:23.5px;box-sizing:border-box;background:#fafafa;"></div>
<div style="position:absolute;left:1161.0px;top:411.5px;width:1068.0px;height:47.0px;box-sizing:border-box;background:#f1f5f7;"></div>
<div style="position:absolute;left:1161.0px;top:458.7px;width:1068.0px;height:1.6px;box-sizing:border-box;background:#dcdcdc;"></div>
<div style="position:absolute;left:1161.0px;top:506.7px;width:1068.0px;height:1.6px;box-sizing:border-box;background:#dcdcdc;"></div>
<div style="position:absolute;left:1161.0px;top:554.7px;width:1068.0px;height:1.6px;box-sizing:border-box;background:#dcdcdc;"></div>
<div style="position:absolute;left:1161.0px;top:602.7px;width:1068.0px;height:1.6px;box-sizing:border-box;background:#dcdcdc;"></div>
<div style="position:absolute;left:1161.0px;top:650.7px;width:1068.0px;height:1.6px;box-sizing:border-box;background:#dcdcdc;"></div>
<div style="position:absolute;left:1202.9px;top:459.5px;width:1.6px;height:192.0px;box-sizing:border-box;background:#dcdcdc;"></div>
<div style="position:absolute;left:1202.9px;top:421.0px;width:1.6px;height:24.0px;box-sizing:border-box;background:#d3d9dd;"></div>
<div style="position:absolute;left:1310.2px;top:459.5px;width:1.6px;height:192.0px;box-sizing:border-box;background:#dcdcdc;"></div>
<div style="position:absolute;left:1310.2px;top:421.0px;width:1.6px;height:24.0px;box-sizing:border-box;background:#d3d9dd;"></div>
<div style="position:absolute;left:2131.7px;top:459.5px;width:1.6px;height:192.0px;box-sizing:border-box;background:#dcdcdc;"></div>
<div style="position:absolute;left:2131.7px;top:421.0px;width:1.6px;height:24.0px;box-sizing:border-box;background:#d3d9dd;"></div>
<div style="position:absolute;left:2163.6px;top:459.5px;width:1.6px;height:192.0px;box-sizing:border-box;background:#dcdcdc;"></div>
<div style="position:absolute;left:2163.6px;top:421.0px;width:1.6px;height:24.0px;box-sizing:border-box;background:#d3d9dd;"></div>
<div style="position:absolute;left:2195.6px;top:459.5px;width:1.6px;height:192.0px;box-sizing:border-box;background:#dcdcdc;"></div>
<div style="position:absolute;left:2195.6px;top:421.0px;width:1.6px;height:24.0px;box-sizing:border-box;background:#d3d9dd;"></div>
<div style="position:absolute;left:2226.7px;top:421.0px;width:1.6px;height:24.0px;box-sizing:border-box;background:#d3d9dd;"></div>
<span class="t " style="top:422.1px;font-size:19.2px;line-height:25px;color:#0f3b5f;left:1319.5px;letter-spacing:0.59px;">Diagnosis</span>
<svg style="position:absolute;left:1173.9px;top:472.5px;" width="23.0" height="20.0" viewBox="0 0 23 20"><path d="M13.600 0.300L22.700 7.600c.4.300.4.900 0 1.200L13.600 15.600c-.5.400-1.200 0-1.200-.6v-3.700c-5 .1-7.600 1.200-6.200 7.300.2.700-.6 1.200-1.100.8C2.300 17.100 0 14 0 11 0 5 5.400 3.600 12.400 3.500V.9c0-.6.700-1 1.200-.6z" fill="#28506c"/></svg>
<span class="t " style="top:470.4px;font-size:19.2px;line-height:25px;color:#262e44;left:1217.1px;letter-spacing:0.58px;">Dx A(1)</span>
<span class="t " style="top:470.4px;font-size:19.2px;line-height:25px;color:#262e44;left:1316.1px;letter-spacing:0.38px;">G93.41 Metabolic encephalopathy</span>
<svg style="position:absolute;left:2145.9px;top:472.1px;" width="10.2" height="20.5" viewBox="0 0 10.200 20.500"><path d="M3.350 20.500V6.400H0L5.100 0L10.200 6.400H6.850V20.500z" fill="#1f4d6b"/></svg>
<svg style="position:absolute;left:2177.9px;top:472.5px;" width="10.2" height="20.5" viewBox="0 0 10.200 20.500"><path d="M3.350 0V14.100H0L5.100 20.500L10.200 14.100H6.850V0z" fill="#1f4d6b"/></svg>
<svg style="position:absolute;left:2204.2px;top:471.7px;" width="21.6" height="21.6" viewBox="0 0 24 24"><circle cx="12" cy="12" r="12" fill="#b32025"/><path d="M6.900 6.900L17.100 17.100M17.100 6.900L6.900 17.100" stroke="#fff" stroke-width="3.900" stroke-linecap="butt"/></svg>
<svg style="position:absolute;left:1173.9px;top:520.5px;" width="23.0" height="20.0" viewBox="0 0 23 20"><path d="M13.600 0.300L22.700 7.600c.4.300.4.900 0 1.200L13.600 15.600c-.5.400-1.200 0-1.200-.6v-3.700c-5 .1-7.600 1.200-6.200 7.300.2.700-.6 1.200-1.100.8C2.300 17.100 0 14 0 11 0 5 5.400 3.600 12.400 3.500V.9c0-.6.700-1 1.200-.6z" fill="#28506c"/></svg>
<span class="t " style="top:518.4px;font-size:19.2px;line-height:25px;color:#262e44;left:1217.1px;letter-spacing:0.41px;">Dx B(2)</span>
<span class="t " style="top:518.4px;font-size:19.2px;line-height:25px;color:#262e44;left:1316.1px;letter-spacing:0.34px;">G93.40 Encephalopathy, unspecified</span>
<svg style="position:absolute;left:2145.9px;top:520.1px;" width="10.2" height="20.5" viewBox="0 0 10.200 20.500"><path d="M3.350 20.500V6.400H0L5.100 0L10.200 6.400H6.850V20.500z" fill="#1f4d6b"/></svg>
<svg style="position:absolute;left:2177.9px;top:520.5px;" width="10.2" height="20.5" viewBox="0 0 10.200 20.500"><path d="M3.350 0V14.100H0L5.100 20.500L10.200 14.100H6.850V0z" fill="#1f4d6b"/></svg>
<svg style="position:absolute;left:2204.2px;top:519.7px;" width="21.6" height="21.6" viewBox="0 0 24 24"><circle cx="12" cy="12" r="12" fill="#b32025"/><path d="M6.900 6.900L17.100 17.100M17.100 6.900L6.900 17.100" stroke="#fff" stroke-width="3.900" stroke-linecap="butt"/></svg>
<svg style="position:absolute;left:1173.9px;top:568.5px;" width="23.0" height="20.0" viewBox="0 0 23 20"><path d="M13.600 0.300L22.700 7.600c.4.300.4.900 0 1.200L13.600 15.600c-.5.400-1.200 0-1.200-.6v-3.700c-5 .1-7.600 1.200-6.200 7.300.2.700-.6 1.200-1.100.8C2.300 17.100 0 14 0 11 0 5 5.400 3.600 12.400 3.500V.9c0-.6.700-1 1.200-.6z" fill="#28506c"/></svg>
<span class="t " style="top:566.4px;font-size:19.2px;line-height:25px;color:#262e44;left:1217.1px;letter-spacing:0.20px;">Dx C(3)</span>
<span class="t " style="top:566.4px;font-size:19.2px;line-height:25px;color:#262e44;left:1316.1px;letter-spacing:0.30px;">G89.4 Chronic pain syndrome</span>
<svg style="position:absolute;left:2145.9px;top:568.1px;" width="10.2" height="20.5" viewBox="0 0 10.200 20.500"><path d="M3.350 20.500V6.400H0L5.100 0L10.200 6.400H6.850V20.500z" fill="#1f4d6b"/></svg>
<svg style="position:absolute;left:2177.9px;top:568.5px;" width="10.2" height="20.5" viewBox="0 0 10.200 20.500"><path d="M3.350 0V14.100H0L5.100 20.500L10.200 14.100H6.850V0z" fill="#1f4d6b"/></svg>
<svg style="position:absolute;left:2204.2px;top:567.7px;" width="21.6" height="21.6" viewBox="0 0 24 24"><circle cx="12" cy="12" r="12" fill="#b32025"/><path d="M6.900 6.900L17.100 17.100M17.100 6.900L6.900 17.100" stroke="#fff" stroke-width="3.900" stroke-linecap="butt"/></svg>
<svg style="position:absolute;left:1173.9px;top:616.5px;" width="23.0" height="20.0" viewBox="0 0 23 20"><path d="M13.600 0.300L22.700 7.600c.4.300.4.900 0 1.200L13.600 15.600c-.5.400-1.200 0-1.200-.6v-3.700c-5 .1-7.600 1.200-6.200 7.300.2.700-.6 1.200-1.100.8C2.300 17.100 0 14 0 11 0 5 5.400 3.600 12.400 3.500V.9c0-.6.700-1 1.200-.6z" fill="#28506c"/></svg>
<span class="t " style="top:614.4px;font-size:19.2px;line-height:25px;color:#262e44;left:1217.1px;letter-spacing:0.20px;">Dx D(4)</span>
<span class="t " style="top:614.4px;font-size:19.2px;line-height:25px;color:#262e44;left:1316.1px;letter-spacing:0.37px;">G89.29 Other chronic pain</span>
<svg style="position:absolute;left:2145.9px;top:616.1px;" width="10.2" height="20.5" viewBox="0 0 10.200 20.500"><path d="M3.350 20.500V6.400H0L5.100 0L10.200 6.400H6.850V20.500z" fill="#1f4d6b"/></svg>
<svg style="position:absolute;left:2177.9px;top:616.5px;" width="10.2" height="20.5" viewBox="0 0 10.200 20.500"><path d="M3.350 0V14.100H0L5.100 20.500L10.200 14.100H6.850V0z" fill="#1f4d6b"/></svg>
<svg style="position:absolute;left:2204.2px;top:615.7px;" width="21.6" height="21.6" viewBox="0 0 24 24"><circle cx="12" cy="12" r="12" fill="#b32025"/><path d="M6.900 6.900L17.100 17.100M17.100 6.900L6.900 17.100" stroke="#fff" stroke-width="3.900" stroke-linecap="butt"/></svg>
<svg style="position:absolute;left:1170.5px;top:657.6px;" width="8.5" height="14.5" viewBox="0 0 8 14"><path d="M8 0V14L0 7z" fill="#8c8c8c"/></svg>
<div style="position:absolute;left:1190.5px;top:657.0px;width:1008.0px;height:15.2px;box-sizing:border-box;background:#8c8c8c;border-radius:7.600px;"></div>
<svg style="position:absolute;left:2212.5px;top:657.6px;" width="8.5" height="14.5" viewBox="0 0 8 14"><path d="M0 0V14L8 7z" fill="#8c8c8c"/></svg>
<span class="t " style="top:1003.0px;font-size:20.8px;line-height:27px;color:#5d6873;left:41.5px;letter-spacing:0.26px;">Line Item(s) / Charges:</span>
<svg style="position:absolute;left:273.7px;top:1008.5px;" width="18.5" height="17.5" viewBox="0 0 20 20"><path d="M10 2.200V17.800M2.200 10H17.800" stroke="#41ac5c" stroke-width="4.4" stroke-linecap="round" fill="none"/></svg>
<div style="position:absolute;left:307.5px;top:1000.7px;width:31.2px;height:31.2px;box-sizing:border-box;background:#00609c;border-radius:6px;"></div>
<svg style="position:absolute;left:316.0px;top:1010.2px;" width="14.5" height="12.0" viewBox="0 0 14.500 12"><path d="M1.800 6.200L5.400 9.800L12.700 2" fill="none" stroke="#fff" stroke-width="3" stroke-linecap="butt"/></svg>
<span class="t " style="top:1003.0px;font-size:20.8px;line-height:27px;color:#5d6873;left:348.4px;letter-spacing:0.74px;">Default Expand</span>
<div style="position:absolute;left:515.5px;top:1000.7px;width:31.2px;height:31.2px;box-sizing:border-box;background:#00609c;border-radius:6px;"></div>
<svg style="position:absolute;left:524.0px;top:1010.2px;" width="14.5" height="12.0" viewBox="0 0 14.500 12"><path d="M1.800 6.200L5.400 9.800L12.700 2" fill="none" stroke="#fff" stroke-width="3" stroke-linecap="butt"/></svg>
<span class="t " style="top:1003.0px;font-size:20.8px;line-height:27px;color:#5d6873;left:556.3px;letter-spacing:0.62px;">Units by Date</span>
<div style="position:absolute;left:42.8px;top:1047.8px;width:2187.0px;height:230.0px;box-sizing:border-box;background:#fff;border:1.600px solid #dcdcdc;"></div>
<div style="position:absolute;left:43.4px;top:1048.5px;width:2185.6px;height:47.0px;box-sizing:border-box;background:#f1f5f7;"></div>
<div style="position:absolute;left:43.4px;top:1095.7px;width:2185.6px;height:1.6px;box-sizing:border-box;background:#dcdcdc;"></div>
<div style="position:absolute;left:43.4px;top:1143.7px;width:2185.6px;height:1.6px;box-sizing:border-box;background:#dcdcdc;"></div>
<div style="position:absolute;left:43.4px;top:1191.7px;width:2185.6px;height:1.6px;box-sizing:border-box;background:#dcdcdc;"></div>
<div style="position:absolute;left:43.4px;top:1239.7px;width:2185.6px;height:1.6px;box-sizing:border-box;background:#dcdcdc;"></div>
<div style="position:absolute;left:86.6px;top:1096.5px;width:1.6px;height:144.0px;box-sizing:border-box;background:#dcdcdc;"></div>
<div style="position:absolute;left:86.6px;top:1057.5px;width:1.6px;height:33.2px;box-sizing:border-box;background:#d3d9dd;"></div>
<div style="position:absolute;left:119.4px;top:1096.5px;width:1.6px;height:144.0px;box-sizing:border-box;background:#dcdcdc;"></div>
<div style="position:absolute;left:119.4px;top:1057.5px;width:1.6px;height:24.2px;box-sizing:border-box;background:#d3d9dd;"></div>
<div style="position:absolute;left:151.6px;top:1096.5px;width:1.6px;height:144.0px;box-sizing:border-box;background:#dcdcdc;"></div>
<div style="position:absolute;left:151.6px;top:1057.5px;width:1.6px;height:24.2px;box-sizing:border-box;background:#d3d9dd;"></div>
<div style="position:absolute;left:315.5px;top:1096.5px;width:1.6px;height:144.0px;box-sizing:border-box;background:#dcdcdc;"></div>
<div style="position:absolute;left:315.5px;top:1057.5px;width:1.6px;height:24.2px;box-sizing:border-box;background:#d3d9dd;"></div>
<div style="position:absolute;left:500.8px;top:1096.5px;width:1.6px;height:144.0px;box-sizing:border-box;background:#dcdcdc;"></div>
<div style="position:absolute;left:500.8px;top:1057.5px;width:1.6px;height:24.2px;box-sizing:border-box;background:#d3d9dd;"></div>
<div style="position:absolute;left:872.7px;top:1096.5px;width:1.6px;height:144.0px;box-sizing:border-box;background:#dcdcdc;"></div>
<div style="position:absolute;left:872.7px;top:1057.5px;width:1.6px;height:24.2px;box-sizing:border-box;background:#d3d9dd;"></div>
<div style="position:absolute;left:1047.5px;top:1096.5px;width:1.6px;height:144.0px;box-sizing:border-box;background:#dcdcdc;"></div>
<div style="position:absolute;left:1047.5px;top:1057.5px;width:1.6px;height:28.5px;box-sizing:border-box;background:#d3d9dd;"></div>
<div style="position:absolute;left:1135.2px;top:1096.5px;width:1.6px;height:144.0px;box-sizing:border-box;background:#dcdcdc;"></div>
<div style="position:absolute;left:1135.2px;top:1057.5px;width:1.6px;height:28.5px;box-sizing:border-box;background:#d3d9dd;"></div>
<div style="position:absolute;left:1222.6px;top:1096.5px;width:1.6px;height:144.0px;box-sizing:border-box;background:#dcdcdc;"></div>
<div style="position:absolute;left:1222.6px;top:1057.5px;width:1.6px;height:28.5px;box-sizing:border-box;background:#d3d9dd;"></div>
<div style="position:absolute;left:1309.6px;top:1096.5px;width:1.6px;height:144.0px;box-sizing:border-box;background:#dcdcdc;"></div>
<div style="position:absolute;left:1309.6px;top:1057.5px;width:1.6px;height:28.5px;box-sizing:border-box;background:#d3d9dd;"></div>
<div style="position:absolute;left:1397.2px;top:1096.5px;width:1.6px;height:144.0px;box-sizing:border-box;background:#dcdcdc;"></div>
<div style="position:absolute;left:1397.2px;top:1057.5px;width:1.6px;height:28.5px;box-sizing:border-box;background:#d3d9dd;"></div>
<div style="position:absolute;left:1494.9px;top:1096.5px;width:1.6px;height:144.0px;box-sizing:border-box;background:#dcdcdc;"></div>
<div style="position:absolute;left:1494.9px;top:1057.5px;width:1.6px;height:28.5px;box-sizing:border-box;background:#d3d9dd;"></div>
<div style="position:absolute;left:1593.3px;top:1096.5px;width:1.6px;height:144.0px;box-sizing:border-box;background:#dcdcdc;"></div>
<div style="position:absolute;left:1593.3px;top:1057.5px;width:1.6px;height:28.5px;box-sizing:border-box;background:#d3d9dd;"></div>
<div style="position:absolute;left:1691.6px;top:1096.5px;width:1.6px;height:144.0px;box-sizing:border-box;background:#dcdcdc;"></div>
<div style="position:absolute;left:1691.6px;top:1057.5px;width:1.6px;height:28.5px;box-sizing:border-box;background:#d3d9dd;"></div>
<div style="position:absolute;left:1790.1px;top:1096.5px;width:1.6px;height:144.0px;box-sizing:border-box;background:#dcdcdc;"></div>
<div style="position:absolute;left:1790.1px;top:1057.5px;width:1.6px;height:28.5px;box-sizing:border-box;background:#d3d9dd;"></div>
<div style="position:absolute;left:1855.6px;top:1096.5px;width:1.6px;height:144.0px;box-sizing:border-box;background:#dcdcdc;"></div>
<div style="position:absolute;left:1855.6px;top:1057.5px;width:1.6px;height:24.2px;box-sizing:border-box;background:#d3d9dd;"></div>
<div style="position:absolute;left:1975.8px;top:1096.5px;width:1.6px;height:144.0px;box-sizing:border-box;background:#dcdcdc;"></div>
<div style="position:absolute;left:1975.8px;top:1057.5px;width:1.6px;height:24.2px;box-sizing:border-box;background:#d3d9dd;"></div>
<div style="position:absolute;left:2095.7px;top:1096.5px;width:1.6px;height:144.0px;box-sizing:border-box;background:#dcdcdc;"></div>
<div style="position:absolute;left:2095.7px;top:1057.5px;width:1.6px;height:24.2px;box-sizing:border-box;background:#d3d9dd;"></div>
<div style="position:absolute;left:2161.7px;top:1096.5px;width:1.6px;height:144.0px;box-sizing:border-box;background:#dcdcdc;"></div>
<div style="position:absolute;left:2161.7px;top:1057.5px;width:1.6px;height:24.2px;box-sizing:border-box;background:#d3d9dd;"></div>
<div style="position:absolute;left:2205.4px;top:1096.5px;width:1.6px;height:144.0px;box-sizing:border-box;background:#dcdcdc;"></div>
<div style="position:absolute;left:2205.4px;top:1057.5px;width:1.6px;height:24.2px;box-sizing:border-box;background:#d3d9dd;"></div>
<div style="position:absolute;left:2226.7px;top:1058.0px;width:1.6px;height:24.0px;box-sizing:border-box;background:#d3d9dd;"></div>
<div style="position:absolute;left:55.2px;top:1062.5px;width:28.0px;height:28.0px;box-sizing:border-box;background:#f2f5f7;border:1.600px solid #d8d9da;border-radius:7px;"></div>
<span class="t " style="top:1059.8px;font-size:19.2px;line-height:25px;color:#0f3b5f;left:161.3px;letter-spacing:0.37px;">Service Date</span>
<span class="t " style="top:1059.8px;font-size:19.2px;line-height:25px;color:#0f3b5f;left:325.1px;letter-spacing:0.35px;">Service To Date</span>
<span class="t " style="top:1059.8px;font-size:19.2px;line-height:25px;color:#0f3b5f;left:509.9px;letter-spacing:0.12px;">Procedure/CPT Code</span>
<span class="t " style="top:1059.8px;font-size:19.2px;line-height:25px;color:#0f3b5f;left:881.5px;letter-spacing:0.42px;">Line Item Status</span>
<div style="position:absolute;left:1057.6px;top:1057.7px;width:28.0px;height:28.0px;box-sizing:border-box;background:#f3f5f6;border:1.600px solid #d9dadb;border-radius:7px;"></div>
<span class="t " style="top:1060.1px;font-size:19.8px;line-height:26px;color:#0f3b5f;left:1085.4px;transform:scaleX(1.0271);transform-origin:0 0;">M1</span>
<div style="position:absolute;left:1144.6px;top:1057.7px;width:28.0px;height:28.0px;box-sizing:border-box;background:#f3f5f6;border:1.600px solid #d9dadb;border-radius:7px;"></div>
<span class="t " style="top:1060.1px;font-size:19.8px;line-height:26px;color:#0f3b5f;left:1172.4px;transform:scaleX(1.0573);transform-origin:0 0;">M2</span>
<div style="position:absolute;left:1232.1px;top:1057.7px;width:28.0px;height:28.0px;box-sizing:border-box;background:#f3f5f6;border:1.600px solid #d9dadb;border-radius:7px;"></div>
<span class="t " style="top:1060.1px;font-size:19.8px;line-height:26px;color:#0f3b5f;left:1259.7px;transform:scaleX(1.0469);transform-origin:0 0;">M3</span>
<div style="position:absolute;left:1319.6px;top:1057.7px;width:28.0px;height:28.0px;box-sizing:border-box;background:#f3f5f6;border:1.600px solid #d9dadb;border-radius:7px;"></div>
<span class="t " style="top:1060.1px;font-size:19.8px;line-height:26px;color:#0f3b5f;left:1347.1px;transform:scaleX(1.0561);transform-origin:0 0;">M4</span>
<div style="position:absolute;left:1406.9px;top:1057.7px;width:28.0px;height:28.0px;box-sizing:border-box;background:#f3f5f6;border:1.600px solid #d9dadb;border-radius:7px;"></div>
<span class="t " style="top:1060.1px;font-size:19.8px;line-height:26px;color:#0f3b5f;left:1434.5px;letter-spacing:0.68px;">Dx A</span>
<div style="position:absolute;left:1504.6px;top:1057.7px;width:28.0px;height:28.0px;box-sizing:border-box;background:#f3f5f6;border:1.600px solid #d9dadb;border-radius:7px;"></div>
<span class="t " style="top:1060.1px;font-size:19.8px;line-height:26px;color:#0f3b5f;left:1532.5px;letter-spacing:0.33px;">Dx B</span>
<div style="position:absolute;left:1603.1px;top:1057.7px;width:28.0px;height:28.0px;box-sizing:border-box;background:#f3f5f6;border:1.600px solid #d9dadb;border-radius:7px;"></div>
<span class="t " style="top:1060.1px;font-size:19.8px;line-height:26px;color:#0f3b5f;left:1630.8px;letter-spacing:-0.05px;">Dx C</span>
<div style="position:absolute;left:1701.6px;top:1057.7px;width:28.0px;height:28.0px;box-sizing:border-box;background:#f3f5f6;border:1.600px solid #d9dadb;border-radius:7px;"></div>
<span class="t " style="top:1060.1px;font-size:19.8px;line-height:26px;color:#0f3b5f;left:1729.3px;letter-spacing:0.45px;">Dx D</span>
<span class="t " style="top:1059.8px;font-size:19.2px;line-height:25px;color:#0f3b5f;left:1798.8px;letter-spacing:1.03px;">Unit</span>
<span class="t " style="top:1059.8px;font-size:19.2px;line-height:25px;color:#0f3b5f;left:1864.9px;letter-spacing:0.56px;">Charge</span>
<span class="t " style="top:1059.8px;font-size:19.2px;line-height:25px;color:#0f3b5f;left:1985.3px;letter-spacing:0.99px;">Total</span>
<span class="t " style="top:1059.8px;font-size:19.2px;line-height:25px;color:#0f3b5f;left:2105.0px;letter-spacing:0.24px;">Stat...</span>
<div style="position:absolute;left:50.8px;top:1104.5px;width:28.5px;height:28.5px;box-sizing:border-box;background:#fff;border:1.600px solid #d6d6d6;border-radius:7px;"></div>
<svg style="position:absolute;left:98.4px;top:1109.8px;" width="10.2" height="20.5" viewBox="0 0 10.200 20.500"><path d="M3.350 20.500V6.400H0L5.100 0L10.200 6.400H6.850V20.500z" fill="#1f4d6b"/></svg>
<svg style="position:absolute;left:131.0px;top:1110.2px;" width="10.2" height="20.5" viewBox="0 0 10.200 20.500"><path d="M3.350 0V14.100H0L5.100 20.500L10.200 14.100H6.850V0z" fill="#1f4d6b"/></svg>
<span class="t " style="top:1106.6px;font-size:19.9px;line-height:26px;color:#262e44;left:161.8px;letter-spacing:0.72px;">11/11/2025</span>
<span class="t " style="top:1106.6px;font-size:19.9px;line-height:26px;color:#262e44;left:325.3px;letter-spacing:0.72px;">11/11/2025</span>
<span class="t " style="top:1108.8px;font-size:19.2px;line-height:25px;color:#262e44;left:521.9px;letter-spacing:0.07px;">99215 OFFICE O/P EST HI 40-54 MIN</span>
<div style="position:absolute;left:874.7px;top:1098.3px;width:156.2px;height:44.0px;box-sizing:border-box;background:linear-gradient(180deg,#fff 30%,#f4f4f4);border:1.400px solid #bdbdbd;border-radius:7.500px;box-shadow:0 1px 1px rgba(0,0,0,.10);"></div>
<span class="t " style="top:1107.8px;font-size:19.2px;line-height:25px;color:#4f4f4f;left:885.2px;letter-spacing:0.24px;">None Selected</span>
<svg style="position:absolute;left:1014.0px;top:1119.8px;" width="11.0" height="6.1" viewBox="0 0 12 6"><path d="M0 0h12L6 6z" fill="#222"/></svg>
<div style="position:absolute;left:1035.300px;top:1110.5px;width:12.900px;height:20px;overflow:hidden;">
<svg style="position:absolute;left:0.0px;top:2.0px;" width="26.0" height="14.9" viewBox="0 0 24 15"><path d="M12 0C6.500 0 2 3.700 0 7.500 2 11.300 6.500 15 12 15s10-3.700 12-7.500C22 3.700 17.500 0 12 0z" fill="#1283c6"/><circle cx="12" cy="7.500" r="4.800" fill="#fff"/><circle cx="12" cy="7.500" r="3" fill="#1283c6"/><circle cx="10.700" cy="6.200" r="1.300" fill="#fff"/></svg>
</div>
<div style="position:absolute;left:1419.8px;top:1107.0px;width:56.0px;height:30px;overflow:hidden;">
<span class="t" style="left:0;top:1.6px;font-size:19.200px;line-height:25px;color:#262e44;letter-spacing:0.12px;">G93.41</span>
</div>
<div style="position:absolute;left:1516.7px;top:1107.0px;width:57.5px;height:30px;overflow:hidden;">
<span class="t" style="left:0;top:1.6px;font-size:19.200px;line-height:25px;color:#262e44;letter-spacing:-0.20px;">G93.40</span>
</div>
<span class="t " style="top:1108.8px;font-size:19.2px;line-height:25px;color:#262e44;left:1614.3px;letter-spacing:0.22px;">G89.4</span>
<div style="position:absolute;left:1713.5px;top:1107.0px;width:57.0px;height:30px;overflow:hidden;">
<span class="t" style="left:0;top:1.6px;font-size:19.200px;line-height:25px;color:#262e44;letter-spacing:-0.20px;">G89.29</span>
</div>
<span class="t " style="top:1108.1px;font-size:19.9px;line-height:26px;color:#262e44;left:1825.1px;transform:scaleX(0.9679);transform-origin:0 0;">1.0</span>
<span class="t " style="top:1108.1px;font-size:19.9px;line-height:26px;color:#262e44;left:1910.5px;letter-spacing:0.26px;">100.00</span>
<span class="t " style="top:1106.1px;font-size:19.9px;line-height:26px;color:#262e44;left:2026.1px;letter-spacing:0.20px;">100.00</span>
<svg style="position:absolute;left:2118.0px;top:1110.8px;" width="23.2" height="18.2" viewBox="0 0 23.200 18.500"><path d="M1.600 10.200L8.600 16.600L21.600 2" fill="none" stroke="#43ac5c" stroke-width="4.400" stroke-linecap="butt" stroke-linejoin="miter"/></svg>
<svg style="position:absolute;left:2171.0px;top:1111.0px;" width="26.3" height="17.3" viewBox="0 0 26.300 17"><path d="M1.800 0h7c.4 0 .8.200 1.100.500l1.900 1.900h7.800a1.800 1.800 0 0 1 1.800 1.800V6.500H7.400c-1 0-1.900.500-2.400 1.400L0 14V1.800A1.800 1.800 0 0 1 1.800 0z" fill="#f0a51f"/><path d="M7.500 8.200h18c.700 0 1.100.800.800 1.400l-3.500 6.300c-.400.700-1.100 1.100-1.800 1.100H2c-.700 0-1.100-.700-.800-1.300l3.900-6.300c.500-.800 1.400-1.200 2.400-1.200z" fill="#f0a51f"/></svg>
<div style="position:absolute;left:2200px;top:1104.5px;width:27px;height:30px;overflow:hidden;">
<svg style="position:absolute;left:6.9px;top:4.1px;" width="21.6" height="21.6" viewBox="0 0 24 24"><circle cx="12" cy="12" r="12" fill="#b32025"/><path d="M6.900 6.900L17.100 17.100M17.100 6.900L6.900 17.100" stroke="#fff" stroke-width="3.900" stroke-linecap="butt"/></svg>
</div>
<div style="position:absolute;left:50.8px;top:1152.5px;width:28.5px;height:28.5px;box-sizing:border-box;background:#fff;border:1.600px solid #d6d6d6;border-radius:7px;"></div>
<svg style="position:absolute;left:98.4px;top:1157.8px;" width="10.2" height="20.5" viewBox="0 0 10.200 20.500"><path d="M3.350 20.500V6.400H0L5.100 0L10.200 6.400H6.850V20.500z" fill="#1f4d6b"/></svg>
<svg style="position:absolute;left:131.0px;top:1158.2px;" width="10.2" height="20.5" viewBox="0 0 10.200 20.500"><path d="M3.350 0V14.100H0L5.100 20.500L10.200 14.100H6.850V0z" fill="#1f4d6b"/></svg>
<span class="t " style="top:1154.6px;font-size:19.9px;line-height:26px;color:#262e44;left:161.8px;letter-spacing:0.55px;">11/12/2025</span>
<span class="t " style="top:1154.6px;font-size:19.9px;line-height:26px;color:#262e44;left:325.3px;letter-spacing:0.55px;">11/12/2025</span>
<span class="t " style="top:1156.8px;font-size:19.2px;line-height:25px;color:#262e44;left:521.9px;letter-spacing:-0.00px;">96372 THER/PROPH/DIAG INJ SC/IM</span>
<div style="position:absolute;left:874.7px;top:1146.3px;width:156.2px;height:44.0px;box-sizing:border-box;background:linear-gradient(180deg,#fff 30%,#f4f4f4);border:1.400px solid #bdbdbd;border-radius:7.500px;box-shadow:0 1px 1px rgba(0,0,0,.10);"></div>
<span class="t " style="top:1155.8px;font-size:19.2px;line-height:25px;color:#4f4f4f;left:885.2px;letter-spacing:0.24px;">None Selected</span>
<svg style="position:absolute;left:1014.0px;top:1167.8px;" width="11.0" height="6.1" viewBox="0 0 12 6"><path d="M0 0h12L6 6z" fill="#222"/></svg>
<div style="position:absolute;left:1035.300px;top:1158.5px;width:12.900px;height:20px;overflow:hidden;">
<svg style="position:absolute;left:0.0px;top:2.0px;" width="26.0" height="14.9" viewBox="0 0 24 15"><path d="M12 0C6.500 0 2 3.700 0 7.500 2 11.300 6.500 15 12 15s10-3.700 12-7.500C22 3.700 17.500 0 12 0z" fill="#1283c6"/><circle cx="12" cy="7.500" r="4.800" fill="#fff"/><circle cx="12" cy="7.500" r="3" fill="#1283c6"/><circle cx="10.700" cy="6.200" r="1.300" fill="#fff"/></svg>
</div>
<div style="position:absolute;left:1419.8px;top:1155.0px;width:56.0px;height:30px;overflow:hidden;">
<span class="t" style="left:0;top:1.6px;font-size:19.200px;line-height:25px;color:#262e44;letter-spacing:0.12px;">G93.41</span>
</div>
<div style="position:absolute;left:1516.7px;top:1155.0px;width:57.5px;height:30px;overflow:hidden;">
<span class="t" style="left:0;top:1.6px;font-size:19.200px;line-height:25px;color:#262e44;letter-spacing:-0.20px;">G93.40</span>
</div>
<span class="t " style="top:1156.8px;font-size:19.2px;line-height:25px;color:#262e44;left:1614.3px;letter-spacing:0.22px;">G89.4</span>
<div style="position:absolute;left:1713.5px;top:1155.0px;width:57.0px;height:30px;overflow:hidden;">
<span class="t" style="left:0;top:1.6px;font-size:19.200px;line-height:25px;color:#262e44;letter-spacing:-0.20px;">G89.29</span>
</div>
<span class="t " style="top:1156.1px;font-size:19.9px;line-height:26px;color:#262e44;left:1825.1px;transform:scaleX(0.9679);transform-origin:0 0;">1.0</span>
<span class="t " style="top:1156.1px;font-size:19.9px;line-height:26px;color:#262e44;left:1910.5px;letter-spacing:0.26px;">100.00</span>
<span class="t " style="top:1154.1px;font-size:19.9px;line-height:26px;color:#262e44;left:2026.1px;letter-spacing:0.20px;">100.00</span>
<svg style="position:absolute;left:2118.0px;top:1158.8px;" width="23.2" height="18.2" viewBox="0 0 23.200 18.500"><path d="M1.600 10.200L8.600 16.600L21.600 2" fill="none" stroke="#43ac5c" stroke-width="4.400" stroke-linecap="butt" stroke-linejoin="miter"/></svg>
<svg style="position:absolute;left:2171.0px;top:1159.0px;" width="26.3" height="17.3" viewBox="0 0 26.300 17"><path d="M1.800 0h7c.4 0 .8.200 1.100.500l1.900 1.900h7.800a1.800 1.800 0 0 1 1.800 1.800V6.500H7.400c-1 0-1.900.500-2.400 1.400L0 14V1.800A1.800 1.800 0 0 1 1.800 0z" fill="#f0a51f"/><path d="M7.500 8.200h18c.700 0 1.100.800.800 1.400l-3.500 6.300c-.400.700-1.100 1.100-1.800 1.100H2c-.700 0-1.100-.700-.800-1.300l3.900-6.300c.500-.800 1.400-1.200 2.400-1.200z" fill="#f0a51f"/></svg>
<div style="position:absolute;left:2200px;top:1152.5px;width:27px;height:30px;overflow:hidden;">
<svg style="position:absolute;left:6.9px;top:4.1px;" width="21.6" height="21.6" viewBox="0 0 24 24"><circle cx="12" cy="12" r="12" fill="#b32025"/><path d="M6.900 6.900L17.100 17.100M17.100 6.900L6.900 17.100" stroke="#fff" stroke-width="3.900" stroke-linecap="butt"/></svg>
</div>
<div style="position:absolute;left:50.8px;top:1200.5px;width:28.5px;height:28.5px;box-sizing:border-box;background:#fff;border:1.600px solid #d6d6d6;border-radius:7px;"></div>
<svg style="position:absolute;left:98.4px;top:1205.8px;" width="10.2" height="20.5" viewBox="0 0 10.200 20.500"><path d="M3.350 20.500V6.400H0L5.100 0L10.200 6.400H6.850V20.500z" fill="#1f4d6b"/></svg>
<svg style="position:absolute;left:131.0px;top:1206.2px;" width="10.2" height="20.5" viewBox="0 0 10.200 20.500"><path d="M3.350 0V14.100H0L5.100 20.500L10.200 14.100H6.850V0z" fill="#1f4d6b"/></svg>
<span class="t " style="top:1202.6px;font-size:19.9px;line-height:26px;color:#262e44;left:161.8px;letter-spacing:0.55px;">11/13/2025</span>
<span class="t " style="top:1202.6px;font-size:19.9px;line-height:26px;color:#262e44;left:325.3px;letter-spacing:0.55px;">11/13/2025</span>
<span class="t " style="top:1204.8px;font-size:19.2px;line-height:25px;color:#262e44;left:521.1px;letter-spacing:0.49px;">E0110 Crutch forearm pair</span>
<div style="position:absolute;left:874.7px;top:1194.3px;width:156.2px;height:44.0px;box-sizing:border-box;background:linear-gradient(180deg,#fff 30%,#f4f4f4);border:1.400px solid #bdbdbd;border-radius:7.500px;box-shadow:0 1px 1px rgba(0,0,0,.10);"></div>
<span class="t " style="top:1203.8px;font-size:19.2px;line-height:25px;color:#4f4f4f;left:885.2px;letter-spacing:0.24px;">None Selected</span>
<svg style="position:absolute;left:1014.0px;top:1215.8px;" width="11.0" height="6.1" viewBox="0 0 12 6"><path d="M0 0h12L6 6z" fill="#222"/></svg>
<div style="position:absolute;left:1035.300px;top:1206.5px;width:12.900px;height:20px;overflow:hidden;">
<svg style="position:absolute;left:0.0px;top:2.0px;" width="26.0" height="14.9" viewBox="0 0 24 15"><path d="M12 0C6.500 0 2 3.700 0 7.500 2 11.300 6.500 15 12 15s10-3.700 12-7.500C22 3.700 17.500 0 12 0z" fill="#1283c6"/><circle cx="12" cy="7.500" r="4.800" fill="#fff"/><circle cx="12" cy="7.500" r="3" fill="#1283c6"/><circle cx="10.700" cy="6.200" r="1.300" fill="#fff"/></svg>
</div>
<div style="position:absolute;left:1419.8px;top:1203.0px;width:56.0px;height:30px;overflow:hidden;">
<span class="t" style="left:0;top:1.6px;font-size:19.200px;line-height:25px;color:#262e44;letter-spacing:0.12px;">G93.41</span>
</div>
<div style="position:absolute;left:1516.7px;top:1203.0px;width:57.5px;height:30px;overflow:hidden;">
<span class="t" style="left:0;top:1.6px;font-size:19.200px;line-height:25px;color:#262e44;letter-spacing:-0.20px;">G93.40</span>
</div>
<span class="t " style="top:1204.8px;font-size:19.2px;line-height:25px;color:#262e44;left:1614.3px;letter-spacing:0.22px;">G89.4</span>
<div style="position:absolute;left:1713.5px;top:1203.0px;width:57.0px;height:30px;overflow:hidden;">
<span class="t" style="left:0;top:1.6px;font-size:19.200px;line-height:25px;color:#262e44;letter-spacing:-0.20px;">G89.29</span>
</div>
<span class="t " style="top:1204.1px;font-size:19.9px;line-height:26px;color:#262e44;left:1825.1px;transform:scaleX(0.9679);transform-origin:0 0;">1.0</span>
<span class="t " style="top:1204.1px;font-size:19.9px;line-height:26px;color:#262e44;left:1910.5px;letter-spacing:0.26px;">100.00</span>
<span class="t " style="top:1202.1px;font-size:19.9px;line-height:26px;color:#262e44;left:2026.1px;letter-spacing:0.20px;">100.00</span>
<svg style="position:absolute;left:2118.0px;top:1206.8px;" width="23.2" height="18.2" viewBox="0 0 23.200 18.500"><path d="M1.600 10.200L8.600 16.600L21.600 2" fill="none" stroke="#43ac5c" stroke-width="4.400" stroke-linecap="butt" stroke-linejoin="miter"/></svg>
<svg style="position:absolute;left:2171.0px;top:1207.0px;" width="26.3" height="17.3" viewBox="0 0 26.300 17"><path d="M1.800 0h7c.4 0 .8.200 1.100.500l1.900 1.900h7.800a1.800 1.800 0 0 1 1.800 1.800V6.500H7.400c-1 0-1.900.500-2.400 1.400L0 14V1.800A1.800 1.800 0 0 1 1.800 0z" fill="#f0a51f"/><path d="M7.500 8.200h18c.700 0 1.100.800.800 1.400l-3.500 6.300c-.400.700-1.100 1.100-1.800 1.100H2c-.700 0-1.100-.700-.800-1.300l3.900-6.300c.500-.800 1.400-1.200 2.400-1.200z" fill="#f0a51f"/></svg>
<div style="position:absolute;left:2200px;top:1200.5px;width:27px;height:30px;overflow:hidden;">
<svg style="position:absolute;left:6.9px;top:4.1px;" width="21.6" height="21.6" viewBox="0 0 24 24"><circle cx="12" cy="12" r="12" fill="#b32025"/><path d="M6.900 6.900L17.100 17.100M17.100 6.900L6.900 17.100" stroke="#fff" stroke-width="3.900" stroke-linecap="butt"/></svg>
</div>
<div style="position:absolute;left:503.6px;top:1048.6px;width:366.6px;height:192.3px;box-sizing:border-box;border:2.600px solid #e80010;background:transparent;"></div>
</body></html>
